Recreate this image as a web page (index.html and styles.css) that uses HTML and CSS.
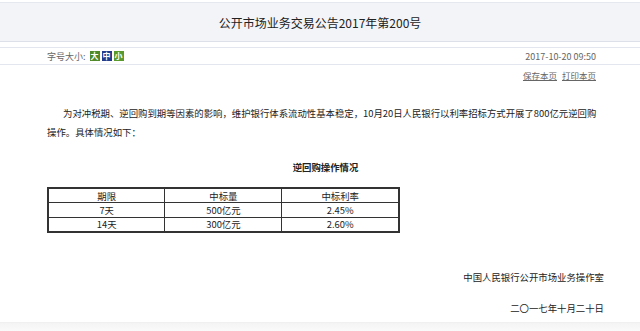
FILE: index.html
```html
<!DOCTYPE html>
<html lang="zh-CN">
<head>
<meta charset="utf-8">
<title>公开市场业务交易公告2017年第200号</title>
<link rel="stylesheet" href="styles.css">
</head>
<body>
<div class="header"><h1 class="title">公开市场业务交易公告2017年第200号</h1></div>
<div class="toolbar">
  <div class="fontsize">字号大小: <span class="fs fs-big">大</span><span class="fs fs-mid">中</span><span class="fs fs-small">小</span></div>
  <div class="date">2017-10-20 09:50</div>
</div>
<div class="actions"><a class="act">保存本页</a><a class="act">打印本页</a></div>
<div class="content">
  <p class="para">为对冲税期、逆回购到期等因素的影响，维护银行体系流动性基本稳定，10月20日人民银行以利率招标方式开展了800亿元逆回购操作。具体情况如下：</p>
  <p class="caption">逆回购操作情况</p>
  <table class="ops">
    <tr><td>期限</td><td>中标量</td><td>中标利率</td></tr>
    <tr><td>7天</td><td>500亿元</td><td>2.45%</td></tr>
    <tr><td>14天</td><td>300亿元</td><td>2.60%</td></tr>
  </table>
  <p class="sign">中国人民银行公开市场业务操作室</p>
  <p class="sign sign-date">二〇一七年十月二十日</p>
</div>
<div class="footer"></div>
</body>
</html>
```
FILE: styles.css
```css
* { box-sizing: border-box; }
html, body { margin: 0; padding: 0; background: #fff; }
body {
  font-family: "Noto Sans CJK SC", "Noto Sans", sans-serif;
  color: #222;
  width: 640px;
  height: 331px;
  overflow: hidden;
  display: flex;
  flex-direction: column;
}
.header {
  margin-top: 2px;
  height: 40px;
  background: #f3f4f8;
  border-top: 1px solid #e6e8ef;
  border-bottom: 1px solid #dde0e8;
  display: flex;
  align-items: center;
  justify-content: center;
}
.title {
  margin: 0;
  font-size: 12px;
  font-weight: normal;
  color: #222;
}
.toolbar {
  margin-top: 5px;
  height: 18px;
  border-top: 1px solid #e3e6ee;
  border-bottom: 1px solid #e3e6ee;
  display: flex;
  align-items: center;
  justify-content: space-between;
  padding: 0 44px 0 47px;
  font-size: 9px;
  color: #666;
}
.fontsize { display: flex; align-items: center; }
.fs {
  display: inline-flex;
  align-items: center;
  justify-content: center;
  width: 10px;
  height: 10px;
  margin-left: 2px;
  color: #fff;
  font-size: 8px;
  line-height: 1;
  font-weight: bold;
}
.fs-big { background: #4f8a2a; margin-left: 4px; }
.fs-mid { background: #233c8c; }
.fs-small { background: #5a9a2c; }
.actions {
  display: flex;
  justify-content: flex-end;
  gap: 5px;
  padding-right: 44px;
  margin-top: 4px;
  font-size: 8.5px;
}
.act { color: #666; text-decoration: underline; }
.content {
  padding: 0 36px 0 47px;
  font-size: 9.4px;
  color: #222;
}
.para {
  margin: 23px 0 0;
  text-indent: 16px;
  line-height: 19px;
}
.caption {
  margin: 18px 0 0;
  text-align: center;
  font-weight: bold;
  line-height: 14px;
}
.ops {
  margin-top: 13px;
  width: 353px;
  border-collapse: collapse;
  border: 2px solid #333;
  font-size: 9.4px;
}
.ops td {
  border: 1px solid #333;
  text-align: center;
  height: 14.5px;
  padding: 0;
  width: 118px;
  line-height: 12px;
}
.sign {
  margin: 37px 0 0;
  text-align: right;
  line-height: 14px;
}
.sign-date { margin-top: 17px; }
.footer {
  margin-top: auto;
  height: 9px;
  background: linear-gradient(#f4f4f4, #fafafa);
  border-top: 1px solid #f0f0f0;
}
```
